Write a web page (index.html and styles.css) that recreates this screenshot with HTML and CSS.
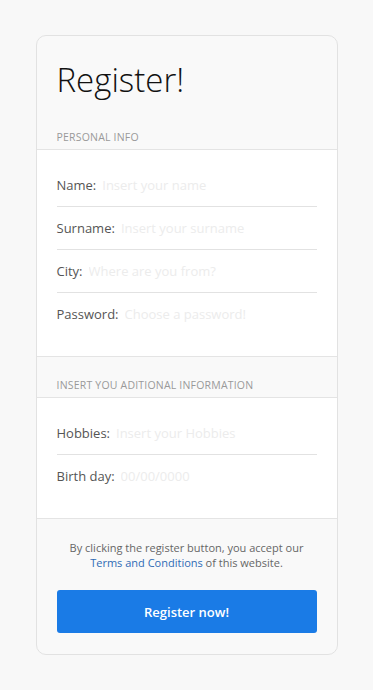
FILE: index.html
```html
<!DOCTYPE html>
<html>
<head>
<meta charset="utf-8">
<link rel="stylesheet" href="styles.css">
</head>
<body>
<form class="card">
  <h1 class="title">Register!</h1>
  <div class="group-label">Personal info</div>
  <div class="section">
    <label class="row"><span class="label">Name:</span><input class="field" type="text" placeholder="Insert your name"></label>
    <label class="row"><span class="label">Surname:</span><input class="field" type="text" placeholder="Insert your surname"></label>
    <label class="row"><span class="label">City:</span><input class="field" type="text" placeholder="Where are you from?"></label>
    <label class="row"><span class="label">Password:</span><input class="field" type="password" placeholder="Choose a password!"></label>
  </div>
  <div class="group-label group-label--spaced">Insert you aditional information</div>
  <div class="section">
    <label class="row"><span class="label">Hobbies:</span><input class="field" type="text" placeholder="Insert your Hobbies"></label>
    <label class="row"><span class="label">Birth day:</span><input class="field" type="text" placeholder="00/00/0000"></label>
  </div>
  <div class="footer">
    <p class="terms">By clicking the register button, you accept our <a href="#" class="link">Terms and Conditions</a> of this website.</p>
    <button type="button" class="btn">Register now!</button>
  </div>
</form>
</body>
</html>
```
FILE: styles.css
```css
* { box-sizing: border-box; }
html, body { margin: 0; padding: 0; }
body {
  background: #f8f8f8;
  font-family: "Open Sans", "Liberation Sans", sans-serif;
}
.card {
  width: 302px;
  margin: 35px auto;
  background: #f9f9f9;
  border: 1px solid #e2e2e2;
  border-radius: 10px;
  overflow: hidden;
}
.title {
  margin: 0;
  padding: 21px 20px 0;
  font-size: 33px;
  font-weight: 300;
  line-height: 46px;
  color: #111;
}
.group-label {
  padding: 27px 20px 5px;
  font-size: 10.5px;
  line-height: 14px;
  text-transform: uppercase;
  color: #999;
  letter-spacing: 0.2px;
}
.group-label--spaced { padding-top: 21px; }
.section {
  background: #fff;
  border-top: 1px solid #e4e4e4;
  border-bottom: 1px solid #e4e4e4;
  padding: 14px 20px 21px;
}
.row {
  display: flex;
  align-items: center;
  height: 43px;
  border-bottom: 1px solid #e2e2e2;
}
.row:last-child { border-bottom: none; height: 42px; }
.label {
  font-size: 13px;
  color: #555;
  margin-right: 6px;
  white-space: nowrap;
}
.field {
  flex: 1;
  min-width: 0;
  border: none;
  outline: none;
  padding: 0;
  background: transparent;
  font-family: inherit;
  font-size: 13px;
  color: #333;
}
.field::placeholder { color: #ececec; }
.footer {
  padding: 21px 20px 21px;
  text-align: center;
}
.terms {
  margin: 0 0 20px;
  font-size: 11px;
  line-height: 15px;
  color: #666;
}
.link { color: #2f6bb5; text-decoration: none; }
.btn {
  display: block;
  width: 100%;
  height: 43px;
  border: none;
  border-radius: 3px;
  background: #1a7be6;
  color: #fff;
  font-family: inherit;
  font-size: 13px;
  font-weight: 600;
}
```
